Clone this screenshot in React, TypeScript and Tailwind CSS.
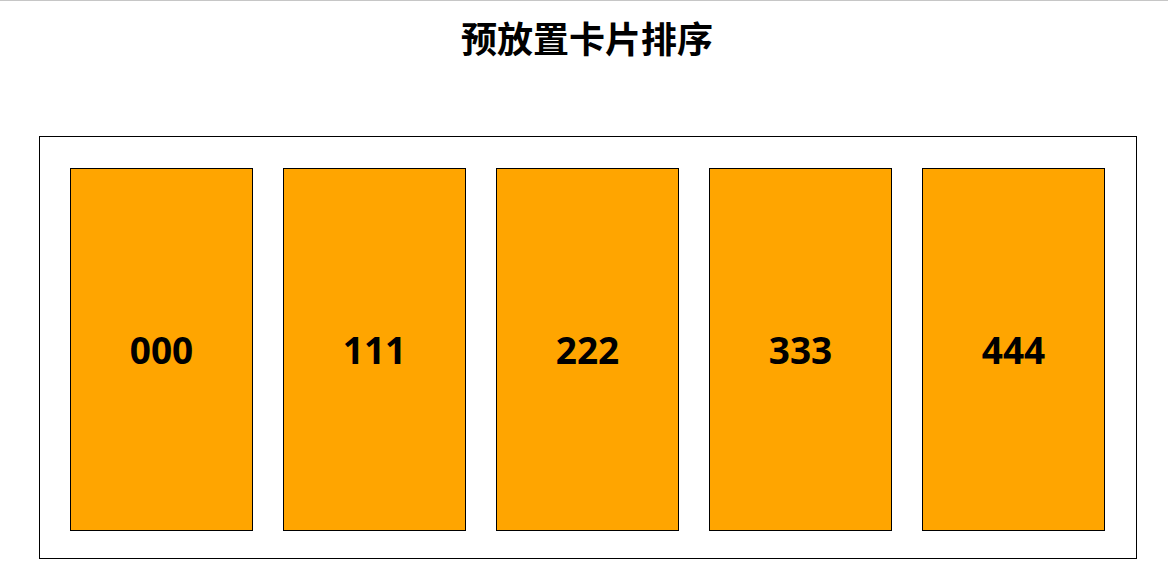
export default function App() {
  const cards = ['000', '111', '222', '333', '444'];

  return (
    <div
      className="min-h-screen bg-white border-t border-[#c6c6c6]"
      style={{ fontFamily: '"Noto Sans", "Noto Sans CJK SC", sans-serif' }}
    >
      <h1 className="pt-[15px] pl-[6px] text-center text-[36px] font-bold leading-[48px] text-black">
        预放置卡片排序
      </h1>

      {/* card tray */}
      <div className="mt-[72px] ml-[39px] w-[1098px] border border-black flex gap-[30px] px-[30px] pt-[31px] pb-[27px]">
        {cards.map((c) => (
          <div
            key={c}
            className="w-[183px] h-[363px] bg-[#ffa500] border border-black flex items-center justify-center"
          >
            <span className="text-[37px] font-bold text-black">{c}</span>
          </div>
        ))}
      </div>
    </div>
  );
}
